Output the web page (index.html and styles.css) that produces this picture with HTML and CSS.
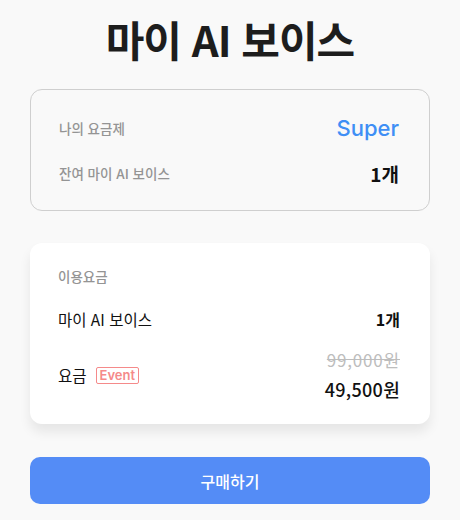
FILE: index.html
```html
<!DOCTYPE html>
<html lang="ko">
<head>
    <meta charset="UTF-8">
    <meta name="viewport" content="width=device-width, initial-scale=1.0">
    <title>마이 AI 보이스</title>
    <link rel="stylesheet" href="styles.css">
</head>
<body>
    <div class="page">
        <h1 class="title">마이 AI 보이스</h1>

        <!-- 내 요금제 -->
        <div class="plan-box">
            <div class="row">
                <span class="label">나의 요금제</span>
                <span class="plan-name">Super</span>
            </div>
            <div class="row">
                <span class="label">잔여 마이 AI 보이스</span>
                <span class="count">1개</span>
            </div>
        </div>

        <!-- 이용요금 -->
        <div class="price-box">
            <div class="price-title">이용요금</div>
            <div class="row item-row">
                <span class="item">마이 AI 보이스</span>
                <span class="count small">1개</span>
            </div>
            <div class="row fee-row">
                <span class="item">요금 <span class="badge">Event</span></span>
                <div class="prices">
                    <span class="old-price">99,000원</span>
                    <span class="new-price">49,500원</span>
                </div>
            </div>
        </div>

        <button class="buy-button">구매하기</button>
    </div>
</body>
</html>
```

FILE: styles.css
```css
html, body {
    margin: 0;
    padding: 0;
    background: #f9f9f9;
    font-family: 'Noto Sans CJK KR', 'Noto Sans', sans-serif;
}

.page {
    display: flex;
    flex-direction: column;
    padding: 0 30px;
}

.title {
    margin: 12px 0 23px;
    text-align: center;
    font-size: 42px;
    font-weight: 700;
    color: #1d1d1d;
    letter-spacing: -1px;
    line-height: 54px;
}

.row {
    display: flex;
    justify-content: space-between;
    align-items: center;
}

.plan-box {
    border: 1px solid #cfcfcf;
    border-radius: 12px;
    padding: 23px 30px 22px 28px;
    display: flex;
    flex-direction: column;
    gap: 15px;
}

.plan-box .row {
    height: 30px;
}

.label {
    font-size: 13.5px;
    font-weight: 500;
    color: #949494;
}

.plan-name {
    font-family: 'Inter', 'Noto Sans', sans-serif;
    font-size: 22px;
    font-weight: 500;
    color: #3f8ff5;
}

.count {
    font-size: 19px;
    font-weight: 700;
    color: #111;
}

.count.small {
    font-size: 16px;
}

.price-box {
    margin-top: 32px;
    background: #fff;
    border-radius: 12px;
    padding: 23px 30px 23px 28px;
    box-shadow: 0 8px 12px rgba(0, 0, 0, 0.08);
    display: flex;
    flex-direction: column;
}

.price-title {
    font-size: 13.5px;
    font-weight: 500;
    color: #949494;
    line-height: 20px;
}

.item-row {
    margin-top: 21px;
    height: 24px;
}

.fee-row {
    margin-top: 18px;
}

.item {
    font-size: 15.5px;
    color: #111;
    display: flex;
    align-items: center;
    gap: 9px;
}

.badge {
    font-family: 'Inter', 'Noto Sans', sans-serif;
    font-size: 13px;
    font-weight: 600;
    color: #f58a8a;
    border: 1px solid #f58a8a;
    border-radius: 2px;
    padding: 0 3px;
    line-height: 15px;
}

.prices {
    display: flex;
    flex-direction: column;
    align-items: flex-end;
    gap: 6px;
}

.old-price {
    font-size: 17px;
    line-height: 22px;
    letter-spacing: 0.8px;
    color: #bdbdbd;
    text-decoration: line-through;
}

.new-price {
    font-size: 18px;
    line-height: 24px;
    letter-spacing: 0.3px;
    font-weight: 500;
    color: #111;
}

.buy-button {
    margin-top: 33px;
    height: 47px;
    border: none;
    border-radius: 10px;
    background: #548cf6;
    color: #fff;
    font-family: inherit;
    font-size: 16px;
    font-weight: 500;
    cursor: pointer;
}
```
